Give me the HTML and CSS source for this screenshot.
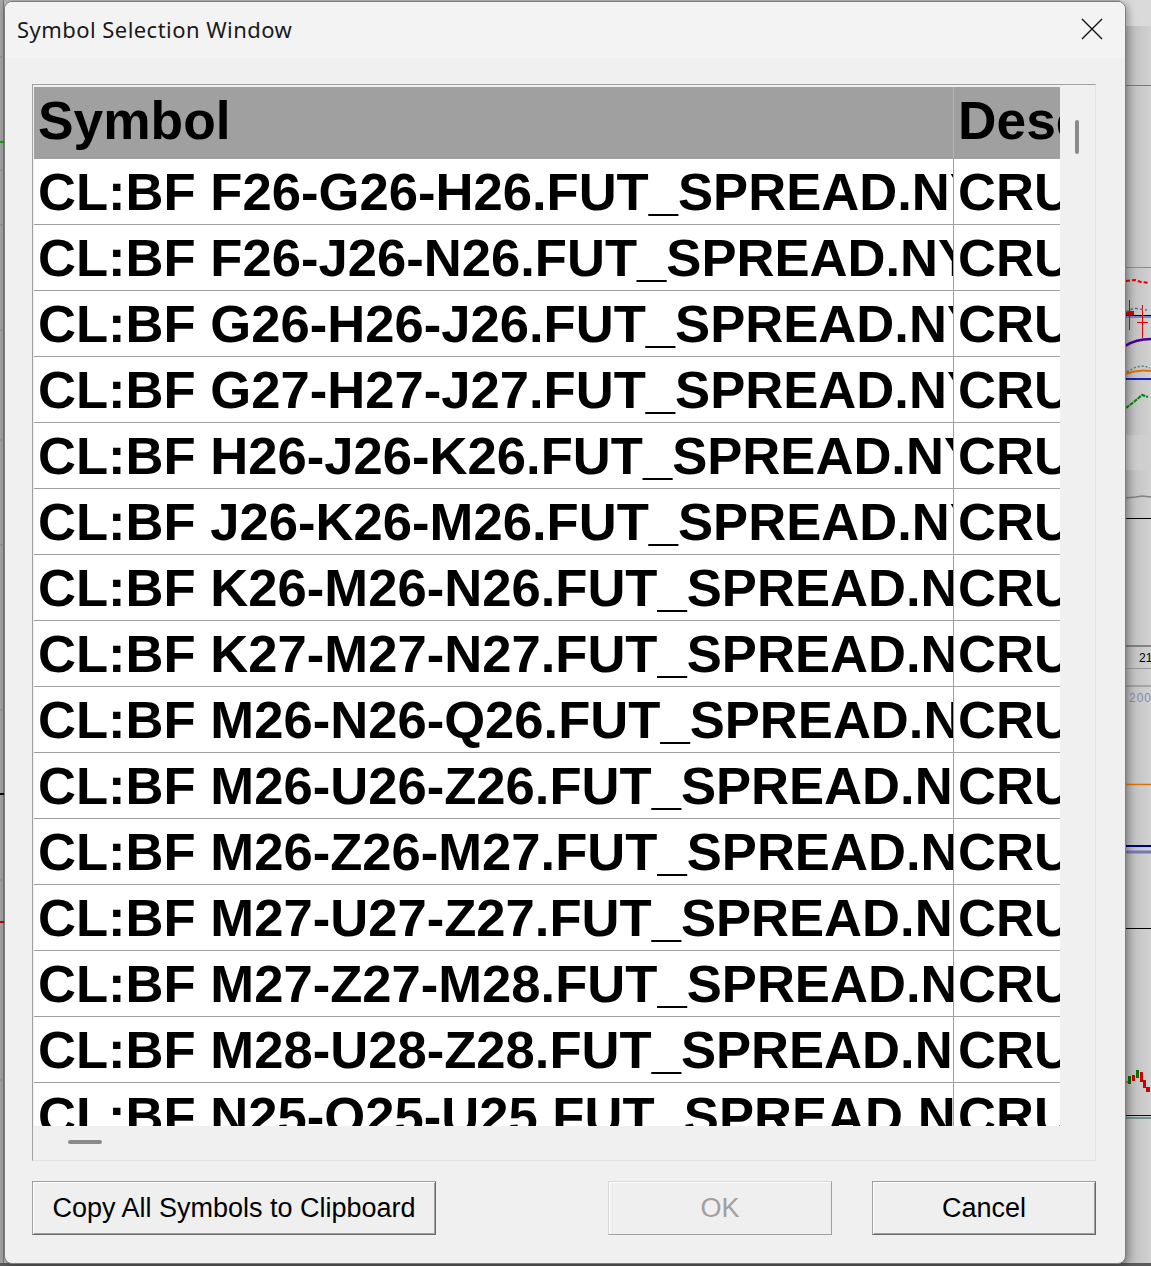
FILE: index.html
```html
<!DOCTYPE html>
<html lang="en">
<head>
    <meta charset="UTF-8">
    <meta name="viewport" content="width=device-width, initial-scale=1.0">
    <title>Symbol Selection Window</title>
    <link rel="stylesheet" href="styles.css">
</head>
<body>
    <!-- chart application behind the dialog -->
    <svg class="backdrop" width="1151" height="1266" viewBox="0 0 1151 1266">
        <defs>
            <linearGradient id="strip" x1="0" y1="0" x2="1" y2="0">
                <stop offset="0" stop-color="#9c9c9c"/>
                <stop offset="0.25" stop-color="#bcbcbc"/>
                <stop offset="1" stop-color="#d2d2d2"/>
            </linearGradient>
        </defs>
        <rect x="0" y="0" width="1151" height="1266" fill="#b8b8b8"/>
        <rect x="1120" y="0" width="31" height="1266" fill="url(#strip)"/>
        <rect x="1120" y="0" width="31" height="26" fill="#dadada"/>
        <rect x="1120" y="435" width="31" height="35" fill="#d0d0d0" opacity="0.7"/>
        <rect x="0" y="0" width="4" height="1266" fill="#a4a4a4"/>
        <line x1="3.5" y1="0" x2="3.5" y2="1266" stroke="#7a7a7a"/>
        <g stroke="#8a8a8a">
            <line x1="0" y1="57" x2="4" y2="57"/>
            <line x1="0" y1="170" x2="4" y2="170"/>
            <line x1="0" y1="225" x2="4" y2="225"/>
            <line x1="0" y1="330" x2="4" y2="330"/>
            <line x1="0" y1="440" x2="4" y2="440"/>
            <line x1="0" y1="545" x2="4" y2="545"/>
            <line x1="0" y1="710" x2="4" y2="710"/>
            <line x1="0" y1="880" x2="4" y2="880"/>
            <line x1="0" y1="1080" x2="4" y2="1080"/>
        </g>
        <line x1="0" y1="142" x2="4" y2="142" stroke="#10a010" stroke-width="2"/>
        <line x1="0" y1="794" x2="4" y2="794" stroke="#000" stroke-width="2"/>
        <line x1="0" y1="922" x2="4" y2="922" stroke="#c00000" stroke-width="2"/>

        <line x1="1125" y1="85.5" x2="1151" y2="85.5" stroke="#7a7a7a"/>
        <line x1="1125" y1="267.5" x2="1151" y2="267.5" stroke="#8c8c8c"/>
        <polyline points="1126,281 1135,280 1141,282 1149,283" fill="none" stroke="#e00000" stroke-width="2" stroke-dasharray="4 2"/>
        <rect x="1126" y="311" width="8" height="7" fill="#d00000"/>
        <line x1="1125" y1="315.5" x2="1151" y2="315.5" stroke="#000"/>
        <line x1="1125" y1="317" x2="1151" y2="317" stroke="#8080c0" stroke-width="2"/>
        <line x1="1129.5" y1="300" x2="1129.5" y2="330" stroke="#e00000"/>
        <line x1="1142.5" y1="305" x2="1142.5" y2="338" stroke="#e00000"/>
        <line x1="1137" y1="322.5" x2="1148" y2="322.5" stroke="#e00000"/>
        <polyline points="1126,312 1134,308 1140,309 1147,310" fill="none" stroke="#508080" stroke-width="1.5" stroke-dasharray="3 2"/>
        <path d="M1125 346 Q1136 339 1151 339" fill="none" stroke="#4b0090" stroke-width="2.5"/>
        <path d="M1125 374 Q1138 369 1151 371" fill="none" stroke="#e07000" stroke-width="2"/>
        <polyline points="1127,372 1136,367 1144,366 1150,368" fill="none" stroke="#508080" stroke-width="1.5" stroke-dasharray="2 2"/>
        <line x1="1125" y1="379" x2="1151" y2="379" stroke="#2020c0" stroke-width="2"/>
        <polyline points="1126,408 1135,401 1142,395 1148,397" fill="none" stroke="#008000" stroke-width="2" stroke-dasharray="4 1"/>
        <polyline points="1125,498 1136,497 1142,496 1151,497" fill="none" stroke="#808080" stroke-width="1.5"/>
        <line x1="1125" y1="518.5" x2="1151" y2="518.5" stroke="#000"/>
        <line x1="1125" y1="646" x2="1151" y2="646" stroke="#3a3a3a"/>
        <text x="1139" y="662" font-family="Liberation Sans, sans-serif" font-size="12" fill="#000">21</text>
        <line x1="1125" y1="668.5" x2="1151" y2="668.5" stroke="#9a9a9a"/>
        <line x1="1125" y1="686" x2="1151" y2="686" stroke="#7c7c7c"/>
        <text x="1129" y="702" font-family="Liberation Sans, sans-serif" font-size="12" letter-spacing="1" fill="#8888b0">200</text>
        <line x1="1125" y1="784.5" x2="1151" y2="784.5" stroke="#e07000" stroke-width="1.5"/>
        <line x1="1125" y1="846" x2="1151" y2="846" stroke="#000090" stroke-width="2"/>
        <line x1="1125" y1="852" x2="1151" y2="852" stroke="#7878b0" stroke-width="3"/>
        <line x1="1125" y1="928.5" x2="1151" y2="928.5" stroke="#000"/>
        <g>
            <rect x="1128" y="1076" width="3" height="8" fill="#007000"/>
            <rect x="1132" y="1075" width="3" height="6" fill="#d00000"/>
            <rect x="1136" y="1070" width="3" height="8" fill="#007000"/>
            <rect x="1140" y="1072" width="3" height="10" fill="#d00000"/>
            <rect x="1143" y="1080" width="3" height="8" fill="#d00000"/>
            <rect x="1146" y="1087" width="4" height="5" fill="#d00000"/>
            <line x1="1125" y1="1082" x2="1128" y2="1082" stroke="#d00000"/>
        </g>
        <line x1="1125" y1="1115.5" x2="1151" y2="1115.5" stroke="#000080"/>
        <line x1="1125" y1="1118" x2="1151" y2="1118" stroke="#508080" stroke-width="1.5"/>
        <rect x="0" y="1263" width="1151" height="3" fill="#5a5a5a"/>
    </svg>

    <div class="dialog">
        <div class="titlebar">
            <span class="title">Symbol Selection Window</span>
            <div class="close">
                <svg width="22" height="22" viewBox="0 0 22 22">
                    <path d="M1 1 L21 21 M21 1 L1 21" stroke="#111" stroke-width="1.4" fill="none"/>
                </svg>
            </div>
        </div>

        <div class="content">
            <div class="grid-box">
                <div class="viewport">
                    <div class="grid">
                        <div class="row head">
                            <div class="cell sym">Symbol</div>
                            <div class="cell desc">Description</div>
                        </div>
                        <div class="row"><div class="cell sym">CL:BF F26-G26-H26.FUT_SPREAD.NYMEX</div><div class="cell desc">CRUDE OIL BUTTERFLY</div></div>
                        <div class="row"><div class="cell sym">CL:BF F26-J26-N26.FUT_SPREAD.NYMEX</div><div class="cell desc">CRUDE OIL BUTTERFLY</div></div>
                        <div class="row"><div class="cell sym">CL:BF G26-H26-J26.FUT_SPREAD.NYMEX</div><div class="cell desc">CRUDE OIL BUTTERFLY</div></div>
                        <div class="row"><div class="cell sym">CL:BF G27-H27-J27.FUT_SPREAD.NYMEX</div><div class="cell desc">CRUDE OIL BUTTERFLY</div></div>
                        <div class="row"><div class="cell sym">CL:BF H26-J26-K26.FUT_SPREAD.NYMEX</div><div class="cell desc">CRUDE OIL BUTTERFLY</div></div>
                        <div class="row"><div class="cell sym">CL:BF J26-K26-M26.FUT_SPREAD.NYMEX</div><div class="cell desc">CRUDE OIL BUTTERFLY</div></div>
                        <div class="row"><div class="cell sym">CL:BF K26-M26-N26.FUT_SPREAD.NYMEX</div><div class="cell desc">CRUDE OIL BUTTERFLY</div></div>
                        <div class="row"><div class="cell sym">CL:BF K27-M27-N27.FUT_SPREAD.NYMEX</div><div class="cell desc">CRUDE OIL BUTTERFLY</div></div>
                        <div class="row"><div class="cell sym">CL:BF M26-N26-Q26.FUT_SPREAD.NYMEX</div><div class="cell desc">CRUDE OIL BUTTERFLY</div></div>
                        <div class="row"><div class="cell sym">CL:BF M26-U26-Z26.FUT_SPREAD.NYMEX</div><div class="cell desc">CRUDE OIL BUTTERFLY</div></div>
                        <div class="row"><div class="cell sym">CL:BF M26-Z26-M27.FUT_SPREAD.NYMEX</div><div class="cell desc">CRUDE OIL BUTTERFLY</div></div>
                        <div class="row"><div class="cell sym">CL:BF M27-U27-Z27.FUT_SPREAD.NYMEX</div><div class="cell desc">CRUDE OIL BUTTERFLY</div></div>
                        <div class="row"><div class="cell sym">CL:BF M27-Z27-M28.FUT_SPREAD.NYMEX</div><div class="cell desc">CRUDE OIL BUTTERFLY</div></div>
                        <div class="row"><div class="cell sym">CL:BF M28-U28-Z28.FUT_SPREAD.NYMEX</div><div class="cell desc">CRUDE OIL BUTTERFLY</div></div>
                        <div class="row"><div class="cell sym">CL:BF N25-Q25-U25.FUT_SPREAD.NYMEX</div><div class="cell desc">CRUDE OIL BUTTERFLY</div></div>
                    </div>
                </div>
                <div class="vscroll"><div class="vthumb"></div></div>
                <div class="hscroll"><div class="hthumb"></div></div>
                <div class="corner"></div>
            </div>

            <div class="buttons">
                <button class="btn copy">Copy All Symbols to Clipboard</button>
                <button class="btn ok" disabled>OK</button>
                <button class="btn cancel">Cancel</button>
            </div>
        </div>
    </div>
</body>
</html>
```

FILE: styles.css
```css
body {
    margin: 0;
    width: 1151px;
    height: 1266px;
    overflow: hidden;
    position: relative;
    background-color: #b8b8b8;
    font-family: "Liberation Sans", Arial, sans-serif;
}
.backdrop {
    position: absolute;
    left: 0;
    top: 0;
}
.dialog {
    position: relative;
    margin: 1px 0 0 4px;
    width: 1122px;
    height: 1263px;
    box-sizing: border-box;
    border: 1px solid #7d7d7d;
    border-radius: 8px;
    background-color: #f0f0f0;
    box-shadow: 2px 2px 8px rgba(0,0,0,0.35);
    display: flex;
    flex-direction: column;
    overflow: hidden;
}
.titlebar {
    height: 56px;
    flex: none;
    background-color: #f3f3f3;
    display: flex;
    align-items: center;
    justify-content: space-between;
    padding-left: 12px;
}
.title {
    font-family: "Noto Sans", "Open Sans", sans-serif;
    font-size: 22px;
    letter-spacing: 0.45px;
    color: #1a1a1a;
    margin-top: -2px;
}
.close {
    width: 46px;
    height: 40px;
    margin-right: 10px;
    margin-top: -3px;
    display: flex;
    align-items: center;
    justify-content: center;
}
.content {
    flex: 1;
    padding: 26px 29px 28px 27px;
    display: flex;
    flex-direction: column;
}
.grid-box {
    height: 1077px;
    box-sizing: border-box;
    border: 1px solid;
    border-color: #a0a0a0 #e3e3e3 #e3e3e3 #a0a0a0;
    padding: 2px 0 0 1px;
    display: grid;
    grid-template-columns: 1026px 35px;
    grid-template-rows: 1039px 34px;
}
.viewport {
    overflow: hidden;
    background-color: #fff;
}
.grid {
    width: 1640px;
}
.row {
    display: flex;
    height: 66px;
    box-sizing: border-box;
    border-bottom: 1px solid #a0a0a0;
    font-size: 52.6px;
    font-weight: bold;
    color: #000;
}
.row.head {
    height: 72px;
    border-bottom: none;
    background-color: #a0a0a0;
    font-size: 53.3px;
}
.cell {
    padding: 0 3px 0 4px;
    line-height: 65px;
    white-space: nowrap;
    overflow: hidden;
    box-sizing: border-box;
}
.head .cell {
    line-height: 68px;
}
.sym {
    width: 920px;
    flex: none;
    border-right: 1px solid #a0a0a0;
}
.head .sym {
    border-right-color: #b4b4b4;
}
.desc {
    width: 720px;
    flex: none;
}
.vscroll, .hscroll, .corner {
    background-color: #f0f0f0;
}
.vthumb {
    margin: 33px 0 0 15px;
    width: 4px;
    height: 34px;
    border-radius: 2px;
    background-color: #8a8a8a;
}
.hthumb {
    margin: 14px 0 0 34px;
    width: 34px;
    height: 4px;
    border-radius: 2px;
    background-color: #8a8a8a;
}
.buttons {
    margin-top: 20px;
    display: flex;
}
.btn {
    height: 54px;
    box-sizing: border-box;
    background-color: #efefef;
    border: 1px solid;
    border-color: #a0a0a0 #696969 #696969 #a0a0a0;
    box-shadow: inset 1px 1px #fff, inset -1px -1px #a0a0a0;
    font-family: "Liberation Sans", Arial, sans-serif;
    font-size: 27px;
    color: #000;
    padding: 0;
}
.copy {
    width: 404px;
}
.ok {
    width: 224px;
    margin-left: auto;
    color: #a0a0a0;
    border-color: #d8d8d8 #a0a0a0 #a0a0a0 #d8d8d8;
    box-shadow: inset 1px 1px #fff;
}
.cancel {
    width: 224px;
    margin-left: 40px;
}
```
